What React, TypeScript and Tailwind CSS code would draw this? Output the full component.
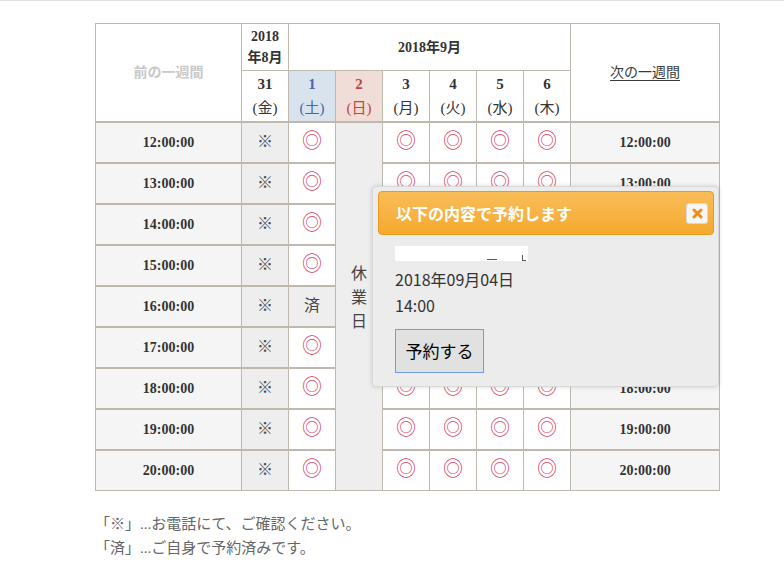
import React from "react";

const B = "border border-[#bfb8ae]";
const serif = { fontFamily: '"Liberation Serif", "Noto Sans CJK JP", serif' };
const sans = { fontFamily: '"Noto Sans CJK JP", "Noto Sans", sans-serif' };

const times = ["12:00:00", "13:00:00", "14:00:00", "15:00:00", "16:00:00", "17:00:00", "18:00:00", "19:00:00", "20:00:00"];

function Maru() {
  return <span className="text-[20px] leading-none text-[#d9456a]" style={sans}>◎</span>;
}

export default function App() {
  return (
    <div className="relative w-[784px] h-[584px] bg-white border-t border-[#e2e2e2] overflow-hidden" style={serif}>
      <div className="pl-[95px] pt-[22px]">
        <table className="border-collapse w-[624px] table-fixed text-[#333]">
          <colgroup>
            <col className="w-[146px]" />
            <col className="w-[47px]" />
            <col className="w-[47px]" />
            <col className="w-[47px]" />
            <col className="w-[47px]" />
            <col className="w-[47px]" />
            <col className="w-[47px]" />
            <col className="w-[47px]" />
            <col className="w-[149px]" />
          </colgroup>
          <thead>
            <tr className="h-[47px]">
              <td rowSpan={2} className={`${B} text-center align-middle font-bold text-[14px] text-[#c9c9c9] p-0`}>前の一週間</td>
              <td className={`${B} text-center align-middle font-bold text-[14px] leading-[21px] p-0`}>2018<br />年8月</td>
              <td colSpan={6} className={`${B} text-center align-middle font-bold text-[14px] p-0`}>2018年9月</td>
              <td rowSpan={2} className={`${B} text-center align-middle text-[14px] text-[#3a3a3a] p-0`}>
                <span className="underline underline-offset-[3px]">次の一週間</span>
              </td>
            </tr>
            <tr className="h-[51px]">
              {[
                { n: "31", w: "(金)", c: "bg-white text-[#333]" },
                { n: "1", w: "(土)", c: "bg-[#d9e3ed] text-[#4a64b0]" },
                { n: "2", w: "(日)", c: "bg-[#f0ddd8] text-[#c0453f]" },
                { n: "3", w: "(月)", c: "bg-white text-[#333]" },
                { n: "4", w: "(火)", c: "bg-white text-[#333]" },
                { n: "5", w: "(水)", c: "bg-white text-[#333]" },
                { n: "6", w: "(木)", c: "bg-white text-[#333]" },
              ].map((d) => (
                <td key={d.n} className={`${B} ${d.c} text-center align-middle text-[15px] leading-[24px] p-0`}>
                  <div className="font-bold">{d.n}</div>
                  <div>{d.w}</div>
                </td>
              ))}
            </tr>
          </thead>
          <tbody>
            {times.map((t, i) => (
              <tr key={t} className="h-[41px]">
                <td className={`${B} border-t-2 bg-[#f5f5f5] text-center align-middle font-bold text-[14px] p-0`}>{t}</td>
                <td className={`${B} border-t-2 bg-[#eeeeee] text-center align-middle text-[16px] text-[#4a4a55] p-0`}>※</td>
                {i === 4 ? (
                  <td className={`${B} border-t-2 bg-[#eeeeee] text-center align-middle text-[16px] text-[#444] p-0`}>済</td>
                ) : (
                  <td className={`${B} border-t-2 bg-white text-center align-middle p-0`}><Maru /></td>
                )}
                {i === 0 && (
                  <td rowSpan={9} className={`${B} border-t-2 bg-[#eeeeee] text-center align-middle text-[16px] leading-[24px] text-[#444] p-0`}>
                    <div className="-mt-[16px]">休<br />業<br />日</div>
                  </td>
                )}
                {[0, 1, 2, 3].map((k) => (
                  <td key={k} className={`${B} border-t-2 bg-white text-center align-middle p-0`}><Maru /></td>
                ))}
                <td className={`${B} border-t-2 bg-[#f5f5f5] text-center align-middle font-bold text-[14px] p-0`}>{t}</td>
              </tr>
            ))}
          </tbody>
        </table>
        <div className="mt-[21px] text-[15px] leading-[24px] text-[#666]">
          <div>「※」...お電話にて、ご確認ください。</div>
          <div>「済」...ご自身で予約済みです。</div>
        </div>
      </div>

      <div className="absolute left-[372px] top-[185px] w-[347px] h-[201px] bg-[#ececec] border border-[#d9d9d9] rounded-[4px] shadow-[0_0_5px_rgba(0,0,0,0.15)] pt-[4px] pl-[5px] pr-[4px]" style={sans}>
        <div className="h-[44px] rounded-[4px] border border-[#e69b20] bg-gradient-to-b from-[#f9bd58] to-[#f5a92c] flex items-center justify-between pl-[17px] pr-[5px]">
          <span className="text-white font-bold text-[16px] -mt-[1px]">以下の内容で予約します</span>
          <div className="w-[22px] h-[21px] rounded-[3px] border border-[#d8d8d8] bg-[#f6f6f6] flex items-center justify-center">
            <svg width="11" height="11" viewBox="0 0 11 11">
              <path d="M2 2 L9 9 M9 2 L2 9" stroke="#f08d1a" strokeWidth="3" strokeLinecap="round" />
            </svg>
          </div>
        </div>
        <div className="pl-[17px] pt-[5px] text-[16px] leading-[26px] text-[#333]">
          <div className="h-[26px] flex items-center">
            <div className="relative w-[133px] h-[15px] bg-white">
              <span className="absolute left-[92px] bottom-[1px] w-[10px] h-[1px] bg-[#555]" />
              <span className="absolute right-[2px] bottom-[0px] w-[4px] h-[6px] border-l border-b border-[#555]" />
            </div>
          </div>
          <div>2018年09月04日</div>
          <div>14:00</div>
          <button className="mt-[11px] w-[89px] h-[44px] bg-[#e1e1e1] border border-[#6e9de3] text-[17px] text-black" style={sans}>予約する</button>
        </div>
      </div>
    </div>
  );
}
